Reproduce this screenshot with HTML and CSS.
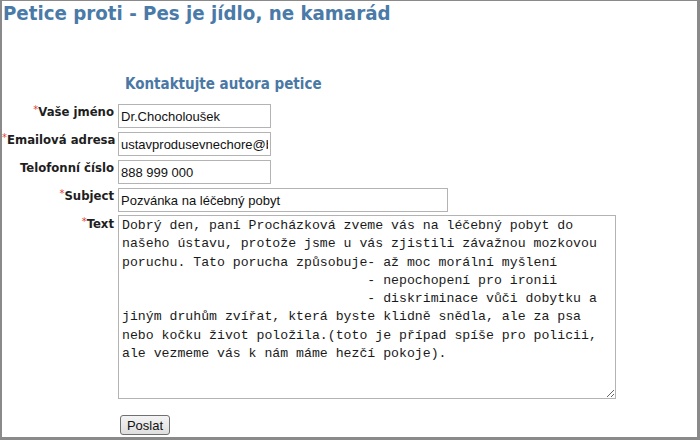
FILE: index.html
```html
<!DOCTYPE html>
<html lang="cs">
<head>
    <meta charset="UTF-8">
    <title>Petice proti - Pes je jídlo, ne kamarád</title>
    <link rel="stylesheet" href="styles.css">
</head>
<body>

<div class="frame">
    <h1 class="title">Petice proti - Pes je jídlo, ne kamarád</h1>

    <form class="contact" onsubmit="return false">
        <h2 class="contact-head">Kontaktujte autora petice</h2>

        <div class="fields">
            <label class="lbl"><span class="req">*</span>Vaše jméno</label>
            <input class="inp" type="text" value="Dr.Chocholoušek">

            <label class="lbl"><span class="req">*</span>Emailová adresa</label>
            <input class="inp" type="text" value="ustavprodusevnechore@bohnice.cz">

            <label class="lbl">Telofonní číslo</label>
            <input class="inp" type="text" value="888 999 000">

            <label class="lbl"><span class="req">*</span>Subject</label>
            <input class="inp wide" type="text" value="Pozvánka na léčebný pobyt">

            <label class="lbl"><span class="req">*</span>Text</label>
            <textarea class="msg">Dobrý den, paní Procházková zveme vás na léčebný pobyt do
našeho ústavu, protože jsme u vás zjistili závažnou mozkovou
poruchu. Tato porucha způsobuje- až moc morální myšlení
                               - nepochopení pro ironii
                               - diskriminace vůči dobytku a
jiným druhům zvířat, která byste klidně snědla, ale za psa
nebo kočku život položila.(toto je případ spíše pro policii,
ale vezmeme vás k nám máme hezčí pokoje).</textarea>

            <span></span>
            <button class="send" type="submit">Poslat</button>
        </div>
    </form>
</div>

</body>
</html>
```
FILE: styles.css
```css
body {
    margin: 0;
    background: #fff;
    font-family: "DejaVu Sans Condensed", "DejaVu Sans", sans-serif;
}
.frame {
    box-sizing: border-box;
    width: 700px;
    height: 440px;
    border-style: solid;
    border-color: #8a8a8a;
    border-width: 1px 3px 3px 2px;
    background: #fff;
    overflow: hidden;
}
.title {
    margin: 0;
    padding: 1px 0 0 1px;
    font-size: 20.3px;
    line-height: 22px;
    font-weight: bold;
    color: #4a7aa7;
}
.contact {
    margin: 0;
}
.contact-head {
    margin: 51px 0 11px 123px;
    font-size: 15px;
    line-height: 18px;
    font-weight: bold;
    color: #4a78a5;
}
.fields {
    display: grid;
    grid-template-columns: 112px 1fr;
    column-gap: 4px;
    row-gap: 4px;
    align-items: start;
}
.lbl {
    text-align: right;
    font-size: 13px;
    line-height: 16px;
    font-weight: bold;
    color: #1e1e1e;
    white-space: nowrap;
}
.req {
    color: #e0403a;
    font-weight: normal;
    font-size: 11px;
    vertical-align: top;
    line-height: 12px;
}
.inp {
    box-sizing: border-box;
    width: 153px;
    height: 24px;
    margin: 0;
    padding: 0 2px;
    border: 1px solid #b3b3b3;
    font-family: "Liberation Sans", Arial, sans-serif;
    font-size: 13px;
    color: #111;
    background: #fff;
}
.wide {
    width: 330px;
}
.msg {
    box-sizing: border-box;
    width: 498px;
    height: 184px;
    margin: -1px 0 0;
    padding: 1px 3px;
    border: 1px solid #b3b3b3;
    font-family: "Liberation Mono", "Courier New", monospace;
    font-size: 13.2px;
    line-height: 18.3px;
    color: #1a1a1a;
    white-space: pre;
    overflow: hidden;
}
.send {
    justify-self: start;
    margin: 12px 0 0 2px;
    width: 50px;
    height: 20px;
    padding: 0;
    border: 1px solid #707070;
    border-radius: 3px;
    background: linear-gradient(#f4f4f4, #dedede);
    font-family: "Liberation Sans", Arial, sans-serif;
    font-size: 13px;
    color: #111;
}
```
